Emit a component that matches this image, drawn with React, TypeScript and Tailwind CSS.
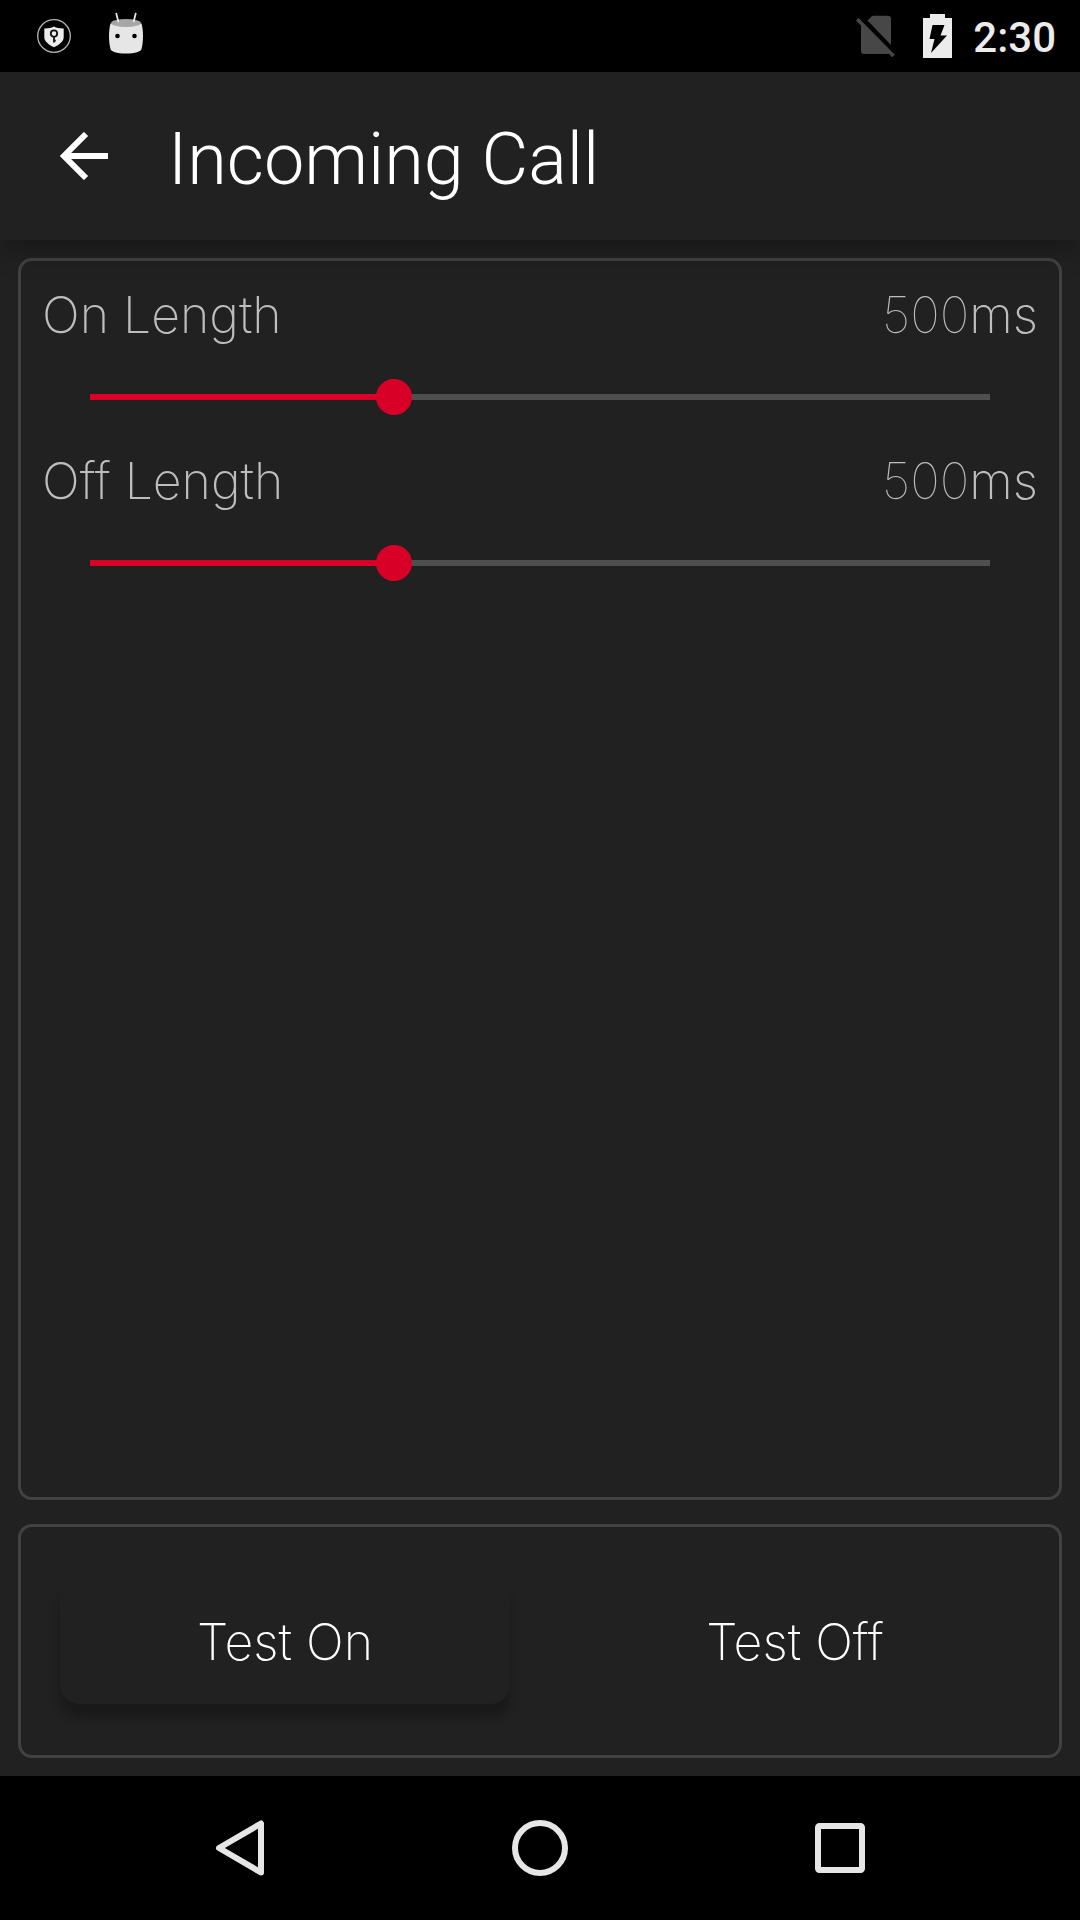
import { CSSProperties, useId, useState } from "react";

const MAX_LENGTH = 1480;

const KeyShieldIcon = () => (
    <svg className="size-9" viewBox="0 0 36 36" fill="none" aria-hidden="true">
        <circle cx="18" cy="18" r="16.3" stroke="#b4b4b4" strokeWidth="1.3" />
        <path
            d="M18 8.6c2.8 1.6 6 2 9.7 1.9v8.5c0 4.6-4.3 7.6-9.7 10.2-5.4-2.6-9.7-5.6-9.7-10.2v-8.5c3.7.1 6.9-.3 9.7-1.9z"
            fill="#ececec"
        />
        <circle cx="18" cy="15.6" r="3.2" stroke="#111" strokeWidth="1.8" />
        <path d="M18 18.8v5.6M18 22.7h1.8" stroke="#111" strokeWidth="1.8" />
    </svg>
);

const MarshmallowIcon = () => (
    <svg className="h-[42px] w-9" viewBox="0 0 36 42" aria-hidden="true">
        <path
            d="M2.5 11.5c-2 7-2 18 0 25.5.6 2.5 6 4.5 15.5 4.5s14.9-2 15.5-4.5c2-7.5 2-18.5 0-25.5z"
            fill="#e6e6e6"
        />
        <ellipse cx="18" cy="11" rx="15" ry="4" fill="#a6a6a6" />
        <path d="M8.3 1.6 10.3 9.5M27.7 1.6 25.7 9.5" stroke="#e6e6e6" strokeWidth="1.8" strokeLinecap="round" />
        <circle cx="9.5" cy="24" r="2.3" fill="#000" />
        <circle cx="26.5" cy="24" r="2.3" fill="#000" />
    </svg>
);

const NoSimIcon = () => (
    <svg className="h-[42px] w-[39px]" viewBox="0 0 39 42" aria-hidden="true">
        <path d="M11.5 5.5 15.5 1.5q.8-.8 2-.8H32q3 0 3 3V30z" fill="#474747" />
        <path d="M5 9.5 33 38.5q-.5.5-1.5.5H8q-3 0-3-3z" fill="#474747" />
        <path d="M1.3 4.3 37.5 41" stroke="#474747" strokeWidth="3.6" />
    </svg>
);

const BatteryIcon = () => (
    <svg className="h-11 w-[29px]" viewBox="0 0 29 44" aria-hidden="true">
        <path d="M7 0h15v4h7v40H0V4h7z" fill="#ececec" />
        <path d="M9.5 11H21.5L17.5 21.5H24L8 39 11.5 25H6.5z" fill="#000" />
    </svg>
);

const StatusBar = () => (
    <div className="flex h-[72px] shrink-0 items-center bg-black pl-9 pr-6">
        <KeyShieldIcon />
        <span className="ml-9 -mt-1.5">
            <MarshmallowIcon />
        </span>
        <span className="ml-auto">
            <NoSimIcon />
        </span>
        <span className="ml-7">
            <BatteryIcon />
        </span>
        <time className="ml-[21px] pt-1 text-[42px] leading-[48px] font-medium text-[#ececec]">2:30</time>
    </div>
);

const AppBar = ({ title }: { title: string }) => (
    <header className="z-10 flex h-[168px] shrink-0 items-center bg-[#212121] pl-12 shadow-[0_12px_24px_rgba(0,0,0,0.25)]">
        <button type="button" aria-label="Back" className="p-3">
            <svg className="size-12" viewBox="0 0 48 48" fill="none" aria-hidden="true">
                <path d="M48 24H4M26 2 4 24l22 22" stroke="#fff" strokeWidth="6" />
            </svg>
        </button>
        <h1 className="ml-12 pt-2 text-[72px] leading-[84px] font-light text-white">{title}</h1>
    </header>
);

type LengthSliderProps = {
    label: string;
    initial: number;
};

const LengthSlider = ({ label, initial }: LengthSliderProps) => {
    const id = useId();
    const [value, setValue] = useState(initial);
    const fill = { "--fill": `${(value / MAX_LENGTH) * 100}%` } as CSSProperties;

    return (
        <div className="mb-[34px]">
            <div className="flex justify-between font-[Inter,sans-serif] text-[50px] leading-[64px] text-[#bdbdbd]">
                <label htmlFor={id} className="font-extralight">{label}</label>
                <output htmlFor={id} className="font-extralight">
                    <span className="font-thin">{value}</span>ms
                </output>
            </div>
            <div className="mt-8 flex px-12">
                <input
                    id={id}
                    type="range"
                    min={0}
                    max={MAX_LENGTH}
                    value={value}
                    onChange={event => setValue(Number(event.target.value))}
                    style={fill}
                    className="h-9 w-full appearance-none bg-[linear-gradient(to_right,#d90028_var(--fill),#4f4f4f_var(--fill))] bg-[length:100%_6px] bg-center bg-no-repeat [&::-webkit-slider-runnable-track]:-mx-[18px] [&::-webkit-slider-thumb]:size-9 [&::-webkit-slider-thumb]:appearance-none [&::-webkit-slider-thumb]:rounded-full [&::-webkit-slider-thumb]:bg-[#d90028]"
                />
            </div>
        </div>
    );
};

const NavBar = () => (
    <nav className="flex h-36 shrink-0 items-center justify-center gap-[228px] bg-black">
        <button type="button" aria-label="Back">
            <svg className="size-[72px]" viewBox="0 0 72 72" fill="none" aria-hidden="true">
                <path d="M57 11.5v49L15 36z" stroke="#e6e6e6" strokeWidth="6" strokeLinejoin="round" />
            </svg>
        </button>
        <button type="button" aria-label="Home">
            <svg className="size-[72px]" viewBox="0 0 72 72" fill="none" aria-hidden="true">
                <circle cx="36" cy="36" r="25" stroke="#e6e6e6" strokeWidth="6" />
            </svg>
        </button>
        <button type="button" aria-label="Recent apps">
            <svg className="size-[72px]" viewBox="0 0 72 72" fill="none" aria-hidden="true">
                <rect x="14" y="14" width="44" height="44" rx="1.5" stroke="#e6e6e6" strokeWidth="6" />
            </svg>
        </button>
    </nav>
);

export default function App() {
    return (
        <div className="flex min-h-screen flex-col bg-[#212121] font-[Roboto,sans-serif]">
            <StatusBar />
            <AppBar title="Incoming Call" />
            <main className="flex grow flex-col gap-6 p-[18px]">
                <section className="grow rounded-[14px] border-3 border-[#424242] px-[21px] pt-[22px]">
                    <LengthSlider label="On Length" initial={500} />
                    <LengthSlider label="Off Length" initial={500} />
                </section>
                <section className="grid grid-cols-2 gap-15 rounded-[14px] border-3 border-[#424242] px-[39px] py-[51px] font-[Inter,sans-serif] text-[50px] leading-[64px] font-extralight text-white">
                    <button type="button" className="h-[126px] rounded-[20px] pt-0.5 shadow-[0_14px_10px_rgba(0,0,0,0.24)]">
                        Test On
                    </button>
                    <button type="button" className="h-[126px] rounded-[20px] pt-0.5">
                        Test Off
                    </button>
                </section>
            </main>
            <NavBar />
        </div>
    );
}
